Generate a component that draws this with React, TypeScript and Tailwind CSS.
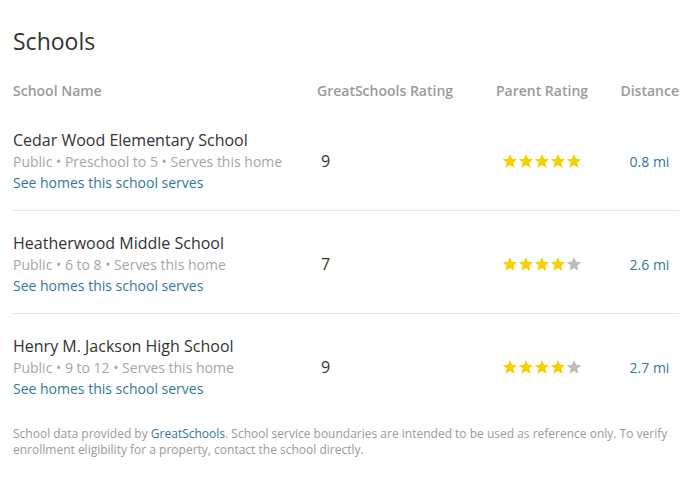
import React from 'react';

interface School {
  name: string;
  details: string;
  rating: number;
  parentRating: number;
  distance: string;
}

const schools: School[] = [
  { name: 'Cedar Wood Elementary School', details: 'Public • Preschool to 5 • Serves this home', rating: 9, parentRating: 5, distance: '0.8 mi' },
  { name: 'Heatherwood Middle School', details: 'Public • 6 to 8 • Serves this home', rating: 7, parentRating: 4, distance: '2.6 mi' },
  { name: 'Henry M. Jackson High School', details: 'Public • 9 to 12 • Serves this home', rating: 9, parentRating: 4, distance: '2.7 mi' },
];

function Star({ filled }: { filled: boolean }) {
  return (
    <svg viewBox="0 0 24 24" className={`w-[16px] h-[16px] ${filled ? 'fill-[#f7d000]' : 'fill-[#bdbdbd]'}`}>
      <path d="M12 1.5l3.1 7.1 7.7.7-5.8 5.1 1.7 7.6L12 18l-6.7 4 1.7-7.6-5.8-5.1 7.7-.7z" />
    </svg>
  );
}

function Stars({ count }: { count: number }) {
  return (
    <div className="flex">
      {[0, 1, 2, 3, 4].map((i) => (
        <Star key={i} filled={i < count} />
      ))}
    </div>
  );
}

export default function App() {
  return (
    <div className="bg-white min-h-screen px-[13px] pt-[27px] pr-[12px] font-['Open_Sans',sans-serif]">
      <h2 className="text-[23px] leading-[28px] text-[#333]">Schools</h2>

      <div className="grid grid-cols-[304px_166px_118px_1fr] mt-[26px] text-[14px] leading-[20px] font-semibold text-[#9a9a9a]">
        <div>School Name</div>
        <div>GreatSchools Rating</div>
        <div className="text-center">Parent Rating</div>
        <div className="text-right">Distance</div>
      </div>

      <div className="mt-[7px]">
        {schools.map((school, index) => (
          <div
            key={index}
            className={`grid grid-cols-[304px_166px_118px_1fr] items-center pt-[21px] pb-[17px] ${index < schools.length - 1 ? 'border-b border-[#e2e2e2]' : ''}`}
          >
            <div>
              <div className="text-[16px] leading-[22px] text-[#333]">{school.name}</div>
              <div className="text-[14px] leading-[21px] text-[#a6a6a6]">{school.details}</div>
              <a href="#" className="block text-[14px] leading-[21px] text-[#30799b]">See homes this school serves</a>
            </div>
            <div className="pl-[4px] text-[16px] text-[#333]">{school.rating}</div>
            <div className="flex justify-center">
              <Stars count={school.parentRating} />
            </div>
            <div className="flex justify-end">
              <div className="w-[59px] text-center text-[14px] text-[#30799b]">{school.distance}</div>
            </div>
          </div>
        ))}
      </div>

      <p className="mt-[10px] text-[12px] leading-[16px] text-[#9a9a9a]">
        School data provided by <a href="#" className="text-[#30799b]">GreatSchools</a>. School service boundaries are intended to be used as reference only. To verify enrollment eligibility for a property, contact the school directly.
      </p>
    </div>
  );
}
